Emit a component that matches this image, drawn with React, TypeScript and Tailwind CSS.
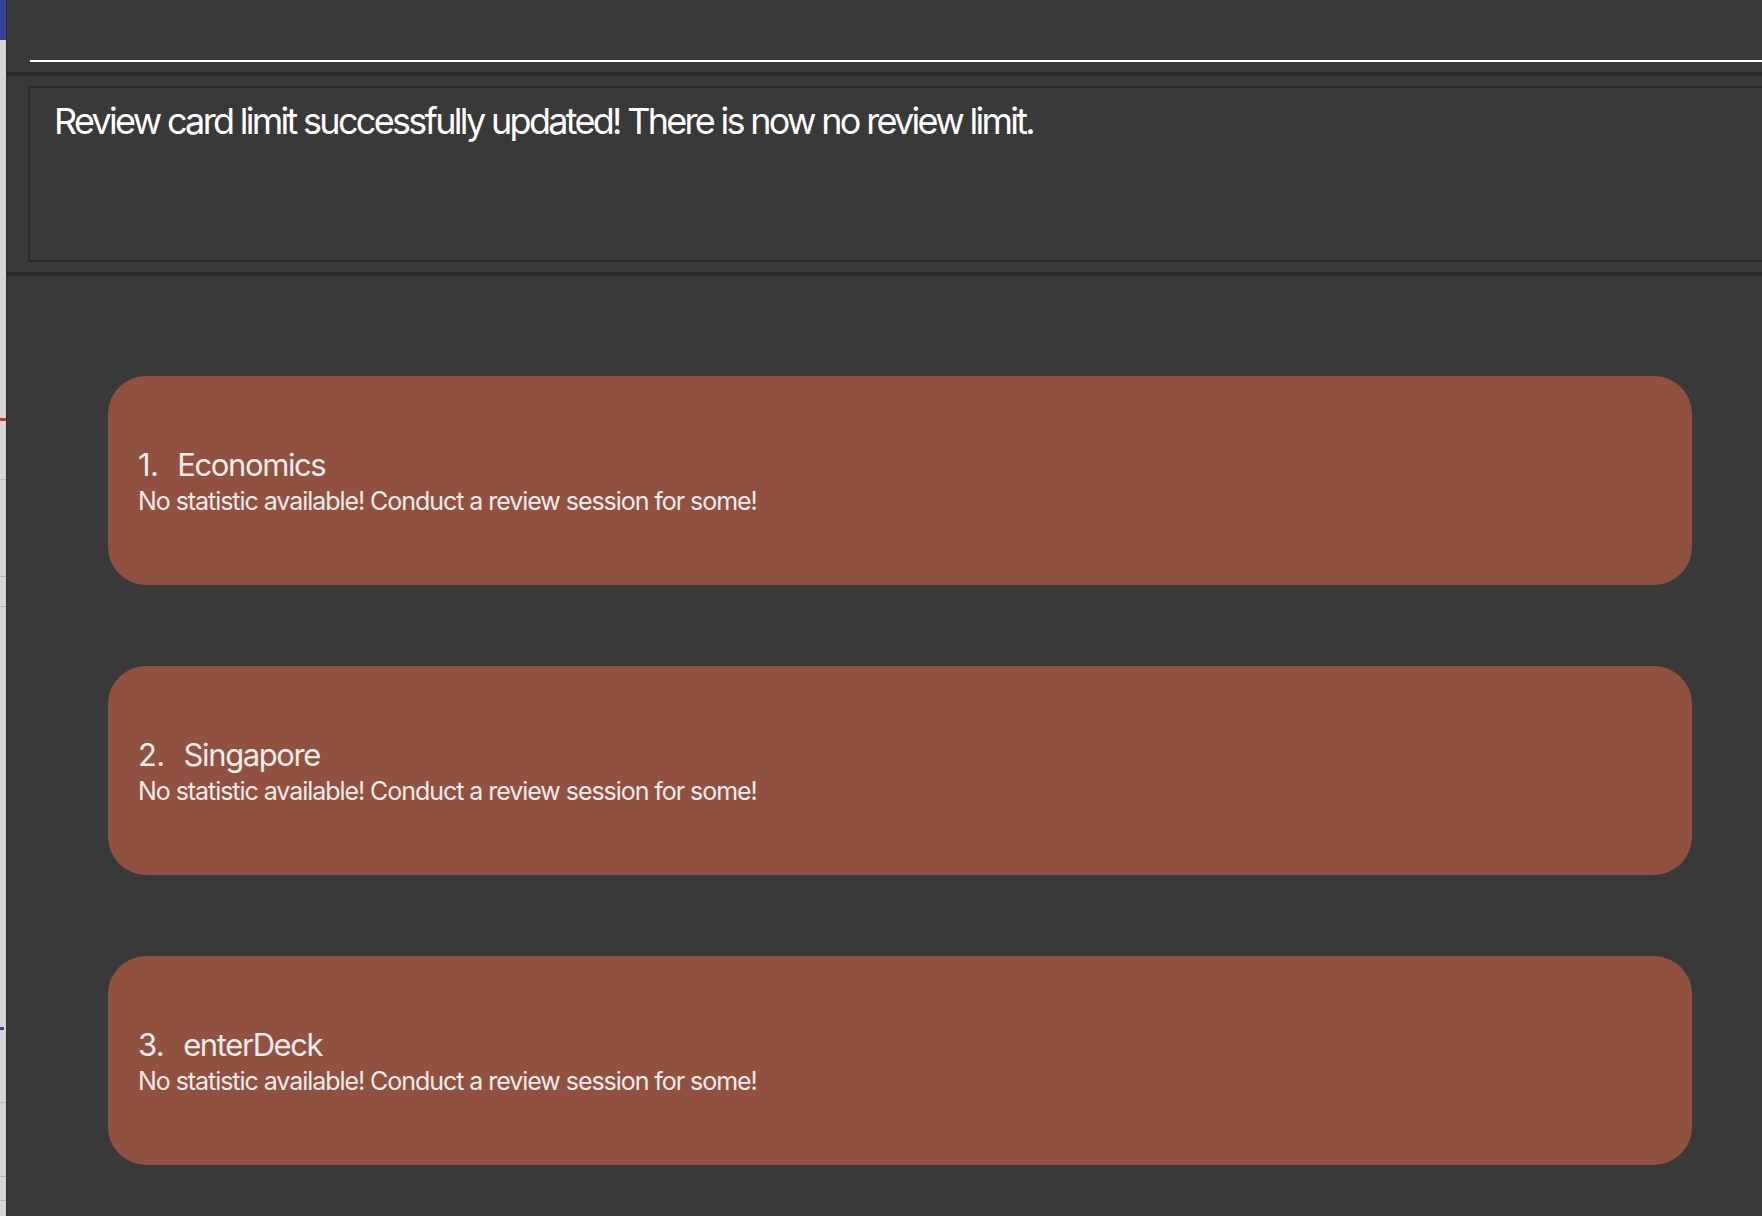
import React from 'react';

interface DeckStat {
  id: number;
  name: string;
  stat: string;
}

const decks: DeckStat[] = [
  { id: 1, name: 'Economics', stat: 'No statistic available! Conduct a review session for some!' },
  { id: 2, name: 'Singapore', stat: 'No statistic available! Conduct a review session for some!' },
  { id: 3, name: 'enterDeck', stat: 'No statistic available! Conduct a review session for some!' },
];

const DeckCard: React.FC<{ deck: DeckStat }> = ({ deck }) => (
  <div className="h-[209px] w-[1584px] shrink-0 rounded-[38px] bg-[#915141] pl-[30px] pt-[71px] text-[#f3eaea]">
    <div className="text-[31px] leading-[36px] whitespace-nowrap">
      <span className="tracking-[-0.02em]">{deck.id}.</span>
      <span className="ml-[19px] tracking-[-0.045em]">{deck.name}</span>
    </div>
    <div className="mt-[3px] text-[25px] leading-[30px] tracking-[-0.042em] whitespace-nowrap">{deck.stat}</div>
  </div>
);

export default function App() {
  return (
    <div className="flex h-screen w-full overflow-hidden bg-[#393939] font-['Inter','Noto_Sans',sans-serif]">
      {/* window behind, peeking out on the left */}
      <div className="relative w-[6px] shrink-0 bg-[#d6d6d6]">
        <div className="absolute left-0 top-0 h-[40px] w-[6px] bg-[#33449a]" />
        <div className="absolute left-0 top-[418px] h-[3px] w-[6px] bg-[#c0392b]" />
        <div className="absolute left-0 top-[479px] h-px w-[6px] bg-[#bdbdbd]" />
        <div className="absolute left-0 top-[576px] h-px w-[6px] bg-[#b5b5b5]" />
        <div className="absolute left-0 top-[606px] h-px w-[6px] bg-[#b5b5b5]" />
        <div className="absolute left-0 top-[1027px] h-[3px] w-[4px] bg-[#33449a]" />
        <div className="absolute left-0 top-[1102px] h-px w-[6px] bg-[#bdbdbd]" />
        <div className="absolute left-0 top-[1176px] h-px w-[6px] bg-[#b5b5b5]" />
        <div className="absolute left-0 top-[1200px] h-px w-[6px] bg-[#b5b5b5]" />
      </div>
      <div className="w-px shrink-0 bg-[#2b2b2b]" />

      <div className="flex min-w-0 flex-1 flex-col">
        {/* command box */}
        <div className="h-[72px] shrink-0 pl-[23px] pt-[60px]">
          <div className="h-[2px] w-full bg-white" />
        </div>
        <div className="h-[4px] shrink-0 bg-[#2a2a2a]" />

        {/* result display */}
        <div className="h-[196px] shrink-0 pl-[21px] pt-[10px]">
          <div className="h-[176px] border-2 border-r-0 border-[#2b2b2b] pl-[24px] pt-[11px]">
            <p className="text-[36px] leading-[44px] tracking-[-0.075em] text-white whitespace-nowrap">
              Review card limit successfully updated! There is now no review limit.
            </p>
          </div>
        </div>
        <div className="h-[4px] shrink-0 bg-[#2a2a2a]" />

        {/* deck list */}
        <div className="flex flex-1 flex-col gap-[81px] pl-[101px] pt-[100px]">
          {decks.map((deck) => (
            <DeckCard key={deck.id} deck={deck} />
          ))}
        </div>
      </div>
    </div>
  );
}
